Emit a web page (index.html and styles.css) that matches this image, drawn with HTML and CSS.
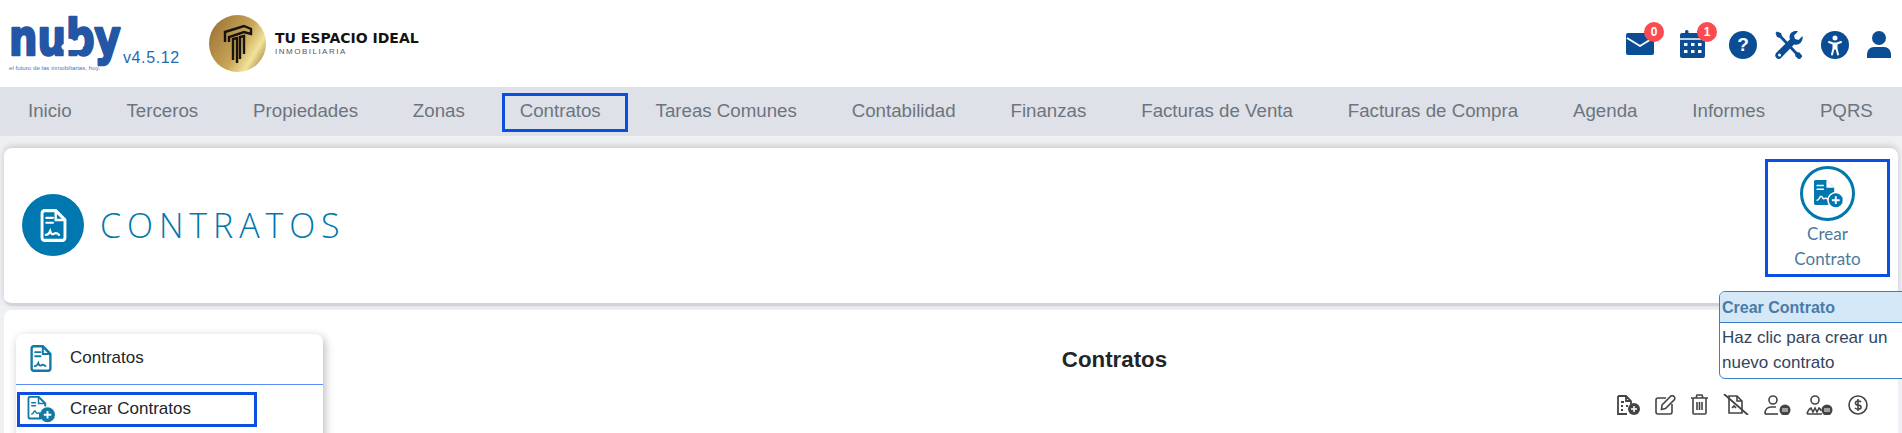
FILE: index.html
```html
<!DOCTYPE html>
<html lang="es">
<head>
  <meta charset="UTF-8" />
  <meta name="viewport" content="width=device-width, initial-scale=1.0"/>
  <title>Contratos</title>
  <link rel="stylesheet" href="styles.css">
</head>
<body>
  <svg class="defs" width="0" height="0">
    <symbol id="doc" viewBox="0 0 24 30">
      <path d="M4 1.500h10l8.500 8.500v16a2.500 2.500 0 0 1-2.500 2.500H4A2.500 2.500 0 0 1 1.500 26V4A2.500 2.500 0 0 1 4 1.500z" fill="none" stroke="currentColor" stroke-width="2.800"/>
      <path d="M14 1.500V10h8.500" fill="none" stroke="currentColor" stroke-width="2.200"/>
      <path d="M5.500 8h6M5.500 12.500h6M5 23.500c2 0 3-1 4-3.500 1 3 2 3.500 3.500 2.500 1.500-1 3-.5 4.500 1" fill="none" stroke="currentColor" stroke-width="2" stroke-linecap="round"/>
    </symbol>
    <symbol id="doc-fill" viewBox="0 0 38 36">
      <path d="M3 0h14l10 10v20a2 2 0 0 1-2 2H3a2 2 0 0 1-2-2V2a2 2 0 0 1 2-2z" fill="currentColor"/>
      <path d="M17 0v10h10z" fill="#fff"/>
      <path d="M5 7h8M5 12h8M5 26c3 0 3-5 5-5s2 4 4 3 3-1 5 1" fill="none" stroke="#fff" stroke-width="2" stroke-linecap="round"/>
      <circle cx="29" cy="26" r="10" fill="currentColor" stroke="#fff" stroke-width="2"/>
      <path d="M29 21v10M24 26h10" stroke="#fff" stroke-width="2.400"/>
    </symbol>
    <symbol id="doc-plus" viewBox="0 0 38 36">
      <path d="M17 24v6H4a2.500 2.500 0 0 1-2.500-2.500v-24A2.500 2.500 0 0 1 4 1h11l9 9v4" fill="none" stroke="currentColor" stroke-width="2.600"/>
      <path d="M15 1v9h9" fill="none" stroke="currentColor" stroke-width="2"/>
      <path d="M6 9h5M6 13h5M6 24c2 0 3-4 4-4s2 3 3 3 2-1 4 0" fill="none" stroke="currentColor" stroke-width="2" stroke-linecap="round"/>
      <circle cx="27" cy="25" r="10" fill="currentColor"/>
      <path d="M27 20v10M22 25h10" stroke="#fff" stroke-width="2.600"/>
    </symbol>
  </svg>

  <header class="topbar">
    <div class="brand">
      <div class="nuby">
        <svg class="nuby-mark" width="114" height="60" viewBox="0 0 114 60">
          <text x="0" y="40" class="nuby-word" transform="scale(0.8 1)">nuby</text>
          <path d="M56 35c-4 0-5-5-1-6 0-5 7-7 10-3 4-2 8 1 7 5 3 1 2 4-1 4z" fill="#fff"/>
          <text x="0" y="55" class="nuby-tag" textLength="91" lengthAdjust="spacingAndGlyphs">el futuro de las inmobiliarias, hoy.</text>
        </svg>
        <span class="version">v4.5.12</span>
      </div>
      <div class="client">
        <svg width="57" height="57" viewBox="0 0 57 57">
          <defs>
            <linearGradient id="gold" x1="0" y1="0.200" x2="1" y2="0.800">
              <stop offset="0" stop-color="#9c7436"/>
              <stop offset="0.550" stop-color="#c9a659"/>
              <stop offset="0.800" stop-color="#f1e39a"/>
              <stop offset="1" stop-color="#a98343"/>
            </linearGradient>
          </defs>
          <circle cx="28.500" cy="28.500" r="28.500" fill="url(#gold)"/>
          <path d="M16 27V17l19-6 7 3v5l-7-2-15 5v5M24 45V24l4-1v25M31 44V22l4-1v18" fill="none" stroke="#17140f" stroke-width="2.400"/>
        </svg>
        <div class="client-name">
          <strong>TU ESPACIO IDEAL</strong>
          <span>INMOBILIARIA</span>
        </div>
      </div>
    </div>
    <div class="tools">
      <a class="tool tool-mail">
        <svg width="28" height="22" viewBox="0 0 28 22"><path d="M2 0h24a2 2 0 0 1 2 2v18a2 2 0 0 1-2 2H2a2 2 0 0 1-2-2V2a2 2 0 0 1 2-2z" fill="#0a4d94"/><path d="M1 5l13 8 13-8" fill="none" stroke="#fff" stroke-width="1.800"/></svg>
        <span class="badge">0</span>
      </a>
      <a class="tool tool-cal">
        <svg width="25" height="28" viewBox="0 0 25 28"><path d="M2 3h21a2 2 0 0 1 2 2v21a2 2 0 0 1-2 2H2a2 2 0 0 1-2-2V5a2 2 0 0 1 2-2z" fill="#0a4d94"/><rect x="5" y="0" width="3.500" height="6" rx="1.500" fill="#0a4d94"/><rect x="17" y="0" width="3.500" height="6" rx="1.500" fill="#0a4d94"/><path d="M0 9h25" stroke="#fff" stroke-width="1.500"/><g fill="#fff"><rect x="4" y="13" width="3.500" height="3"/><rect x="11" y="13" width="3.500" height="3"/><rect x="18" y="13" width="3.500" height="3"/><rect x="4" y="20" width="3.500" height="3"/><rect x="11" y="20" width="3.500" height="3"/><rect x="18" y="20" width="3.500" height="3"/></g></svg>
        <span class="badge">1</span>
      </a>
      <a class="tool tool-help">?</a>
      <a class="tool tool-wrench">
        <svg width="28" height="28" viewBox="0 0 28 28" fill="#0a4d94"><path d="M2 .5L.5 2 2 6l3 1 15 16 .5 2.500 3 2.500c1.500.5 4-2 3.500-3.500l-2.500-3-2.500-.5L7 5 6 2z"/><path d="M27.500 5l-4 4-3.500-1-1-3.500 4-4c-4-1.500-8 1-8.500 5 0 1 .2 2 .5 2.800L1.500 21.500c-2 2-1.500 4 0 5.500s3.500 1.500 5-.5L19 13.500c5 1.500 9.500-3 8.500-8.500z"/><circle cx="4.500" cy="24" r="1.500" fill="#fff"/></svg>
      </a>
      <a class="tool tool-access">
        <svg width="28" height="28" viewBox="0 0 28 28"><circle cx="14" cy="14" r="14" fill="#0a4d94"/><circle cx="14" cy="7" r="2.500" fill="#fff"/><path d="M8 11l4 1.500h4l4-1.500M14 12.500v5M12.500 13v4.500l-1.500 6M15.500 13v4.500l1.500 6" fill="none" stroke="#fff" stroke-width="2" stroke-linecap="round" stroke-linejoin="round"/></svg>
      </a>
      <a class="tool tool-user">
        <svg width="24" height="27" viewBox="0 0 24 27" fill="#0a4d94"><circle cx="12" cy="7" r="7"/><path d="M0 27v-3c0-5 3-8 7-8h10c4 0 7 3 7 8v3z"/></svg>
      </a>
    </div>
  </header>

  <nav class="menu">
    <a>Inicio</a>
    <a>Terceros</a>
    <a>Propiedades</a>
    <a>Zonas</a>
    <a class="marked">Contratos</a>
    <a>Tareas Comunes</a>
    <a>Contabilidad</a>
    <a>Finanzas</a>
    <a>Facturas de Venta</a>
    <a>Facturas de Compra</a>
    <a>Agenda</a>
    <a>Informes</a>
    <a>PQRS</a>
  </nav>

  <section class="card page-head">
    <div class="page-title">
      <span class="title-icon"><svg width="27" height="33" viewBox="0 0 24 30"><use href="#doc"/></svg></span>
      <h1>CONTRATOS</h1>
    </div>
    <button class="create-btn">
      <span class="create-icon"><svg width="30" height="28" viewBox="0 0 38 36"><use href="#doc-fill"/></svg></span>
      <span class="create-text">Crear<br>Contrato</span>
    </button>
  </section>

  <div class="popover">
    <div class="popover-title">Crear Contrato</div>
    <div class="popover-body">Haz clic para crear un nuevo contrato</div>
  </div>

  <section class="card page-body">
    <aside class="side">
      <a class="side-item">
        <svg class="side-doc" width="22" height="27" viewBox="0 0 24 30"><use href="#doc"/></svg>
        Contratos
      </a>
      <a class="side-item side-new">
        <svg class="side-plus" width="29" height="27" viewBox="0 0 38 36"><use href="#doc-plus"/></svg>
        Crear Contratos
      </a>
    </aside>
    <div class="content">
      <h2>Contratos</h2>
      <div class="actions">
        <svg width="24" height="20" viewBox="0 0 24 20"><path d="M2 1h8l5 5v6M2 1v18h9M10 1v5h5M5 7h3M5 11h2M5 15h2M10 11h2" fill="none" stroke="currentColor" stroke-width="1.800"/><circle cx="18" cy="14" r="6" fill="currentColor"/><path d="M18 11v6M15 14h6" stroke="#fff" stroke-width="1.500"/></svg>
        <svg width="21" height="20" viewBox="0 0 21 20"><path d="M11 3H3a2 2 0 0 0-2 2v12a2 2 0 0 0 2 2h12a2 2 0 0 0 2-2V9" fill="none" stroke="currentColor" stroke-width="1.600"/><path d="M7 10l9-9c1-.5 2-.5 3 .5s1 2 .5 3l-9 9-4 1z" fill="none" stroke="currentColor" stroke-width="1.600"/></svg>
        <svg width="17" height="21" viewBox="0 0 17 21" fill="none" stroke="currentColor" stroke-width="1.600"><path d="M0 4h17M5 4l1-3h5l1 3M2 4v15a1 1 0 0 0 1 1h11a1 1 0 0 0 1-1V4M6 8v8M8.500 8v8M11 8v8"/></svg>
        <svg width="26" height="21" viewBox="0 0 26 21" fill="none" stroke="currentColor" stroke-width="1.600"><path d="M6 2v17h13V7l-5-5zM14 2v5h5M9 14l2-2 2 2"/><path d="M1 0l24 21" stroke-width="1.800"/></svg>
        <svg width="27" height="20" viewBox="0 0 27 20"><circle cx="9" cy="5" r="4" fill="none" stroke="currentColor" stroke-width="1.600"/><path d="M1 19c0-5 3-7 6-7h5" fill="none" stroke="currentColor" stroke-width="1.600"/><path d="M1 19h13" stroke="currentColor" stroke-width="1.600"/><circle cx="21" cy="15" r="5.500" fill="currentColor"/><path d="M18 14h6M18 16h6" stroke="#fff" stroke-width="1"/></svg>
        <svg width="27" height="20" viewBox="0 0 27 20"><circle cx="9" cy="5" r="4" fill="none" stroke="currentColor" stroke-width="1.600"/><path d="M1 19c1-4 2-5 4-6l2 4 2-4 2 4 2-4c1 .5 2 2 2 3M1 19h15" fill="none" stroke="currentColor" stroke-width="1.600"/><circle cx="21" cy="15" r="5.500" fill="currentColor"/><path d="M18 14h6M18 16h6" stroke="#fff" stroke-width="1"/></svg>
        <svg width="20" height="20" viewBox="0 0 20 20" fill="none" stroke="currentColor" stroke-width="1.600"><circle cx="10" cy="10" r="9"/><path d="M13 7c-1-1.500-5-1.500-5.500.5S9 10 10 10s3 .5 3 2.500-4.500 2-6 .5M10 4v12"/></svg>
      </div>
    </div>
  </section>
</body>
</html>
```

FILE: styles.css
```css
* { box-sizing: border-box; margin: 0; padding: 0; }
html, body { height: 433px; overflow: hidden; }
body {
  position: relative;
  background: #eef0f4;
  font-family: "Liberation Sans", Arial, sans-serif;
  color: #212529;
}
.defs { position: absolute; }

/* top bar */
.topbar {
  height: 87px;
  background: #fff;
  display: flex;
  justify-content: space-between;
  padding: 15px 11px 0 9px;
}
.brand { display: flex; }
.nuby { display: flex; align-items: flex-start; width: 200px; }
.nuby-mark { overflow: visible; }
.nuby-word {
  font-family: "DejaVu Sans", sans-serif;
  font-weight: 700;
  font-size: 50px;
  fill: #2456a6;
  stroke: #2456a6;
  stroke-width: 2.500;
  stroke-linejoin: round;
}
.nuby-tag { font-family: "Liberation Sans", sans-serif; font-size: 6px; fill: #4f78bd; }
.version {
  margin-top: 34px;
  font-size: 16px;
  letter-spacing: 0.6px;
  color: #1f6bb0;
}
.client { display: flex; align-items: flex-start; gap: 9px; }
.client-name { display: flex; flex-direction: column; padding-top: 15px; }
.client-name strong {
  font-family: "DejaVu Sans", sans-serif;
  font-size: 14px;
  line-height: 17px;
  color: #15130f;
  white-space: nowrap;
}
.client-name span {
  font-size: 8px;
  line-height: 10px;
  letter-spacing: 1.5px;
  color: #57544f;
}

.tools { display: flex; align-items: flex-start; gap: 18px; padding-top: 16px; }
.tool { position: relative; display: block; }
.tool svg { display: block; }
.tool-mail { margin: 2px 8px 0 0; }
.tool-cal { margin: -1px 6px 0 0; }
.tool-help {
  width: 28px;
  height: 28px;
  border-radius: 50%;
  background: #0a4d94;
  color: #fff;
  font-weight: 700;
  font-size: 19px;
  line-height: 28px;
  text-align: center;
}
.badge {
  position: absolute;
  top: -11px;
  right: -10px;
  width: 20px;
  height: 20px;
  border-radius: 50%;
  background: #fb4a50;
  color: #fff;
  font-weight: 700;
  font-size: 12px;
  line-height: 20px;
  text-align: center;
}
.tool-cal .badge { top: -8px; right: -12px; }

/* main menu */
.menu {
  height: 49px;
  background: #dee1e8;
  display: flex;
  justify-content: space-between;
  align-items: center;
  padding: 0 29px 2px 28px;
  font-size: 18.700px;
  color: #6c757d;
}
.menu a { position: relative; white-space: nowrap; }
.marked::after {
  content: "";
  position: absolute;
  top: -7px;
  bottom: -10px;
  left: -18px;
  right: -27px;
  border: 3px solid #0a4fe0;
}

/* cards */
.card {
  background: #fff;
  border-radius: 8px;
  margin: 0 4px;
  box-shadow: 0 -2px 6px rgba(0, 0, 0, 0.16);
}
.page-head {
  height: 158px;
  margin-top: 12px;
  display: flex;
  justify-content: space-between;
  padding: 11px 8px 0 18px;
  border-bottom: 3px solid #d2d4d8;
}
.page-title { display: flex; align-items: center; gap: 16px; height: 132px; }
.title-icon {
  width: 62px;
  height: 62px;
  border-radius: 50%;
  background: #0077ae;
  color: #fff;
  display: flex;
  align-items: center;
  justify-content: center;
}
.page-title h1 {
  font-family: "Open Sans", sans-serif;
  font-weight: 300;
  font-size: 34px;
  letter-spacing: 5.900px;
  color: #0077ae;
}
.create-btn {
  width: 125px;
  height: 118px;
  border: 3px solid #0a4fe0;
  background: #fff;
  display: flex;
  flex-direction: column;
  align-items: center;
  padding-top: 4px;
  font-family: "Lato", sans-serif;
  font-size: 17px;
  color: #4c7a9c;
}
.create-icon {
  width: 55px;
  height: 55px;
  border: 3px solid #0077ae;
  border-radius: 50%;
  color: #0077ae;
  display: flex;
  align-items: center;
  justify-content: center;
}
.create-text { line-height: 25px; }

/* popover over the right edge */
.popover {
  position: absolute;
  top: 291px;
  left: 1719px;
  width: 200px;
  height: 88px;
  background: #fff;
  border: 1px solid #3d7fc4;
  border-radius: 6px;
  font-size: 16px;
  z-index: 2;
}
.popover-title {
  height: 31px;
  padding-left: 2px;
  background: #d4e8f8;
  border-bottom: 1px solid #3d7fc4;
  border-radius: 5px 5px 0 0;
  color: #4a7ba6;
  font-weight: 700;
  line-height: 31px;
}
.popover-body { width: 175px; padding: 2px 0 0 2px; font-size: 17px; line-height: 25px; color: #2f4560; }

/* lower card */
.page-body {
  height: 140px;
  margin-top: 4px;
  display: flex;
  padding: 24px 0 0 12px;
  box-shadow: none;
}
.side {
  width: 307px;
  height: 130px;
  background: #fff;
  border-radius: 8px;
  box-shadow: 2px 3px 10px rgba(0, 0, 0, 0.28);
  font-size: 17px;
  flex-shrink: 0;
}
.side-item { position: relative; display: flex; align-items: center; padding-bottom: 2px; color: #212529; }
.side-item:first-child {
  height: 51px;
  padding-left: 54px;
  border-bottom: 1px solid #5b8ff5;
}
.side-doc { position: absolute; left: 14px; top: 11px; color: #0f7aa6; }
.side-new {
  height: 35px;
  width: 240px;
  margin: 7px 0 0 1px;
  padding-left: 50px;
  border: 3px solid #0a4fe0;
}
.side-plus { position: absolute; left: 7px; top: 1px; color: #0f7aa6; }

.content { flex: 1; padding: 13px 30px 0 0; }
.content h2 { font-size: 22.300px; line-height: 25px; text-align: center; margin-bottom: 22px; padding-left: 38px; }
.actions { display: flex; justify-content: flex-end; align-items: center; gap: 15px; color: #444; }
```
